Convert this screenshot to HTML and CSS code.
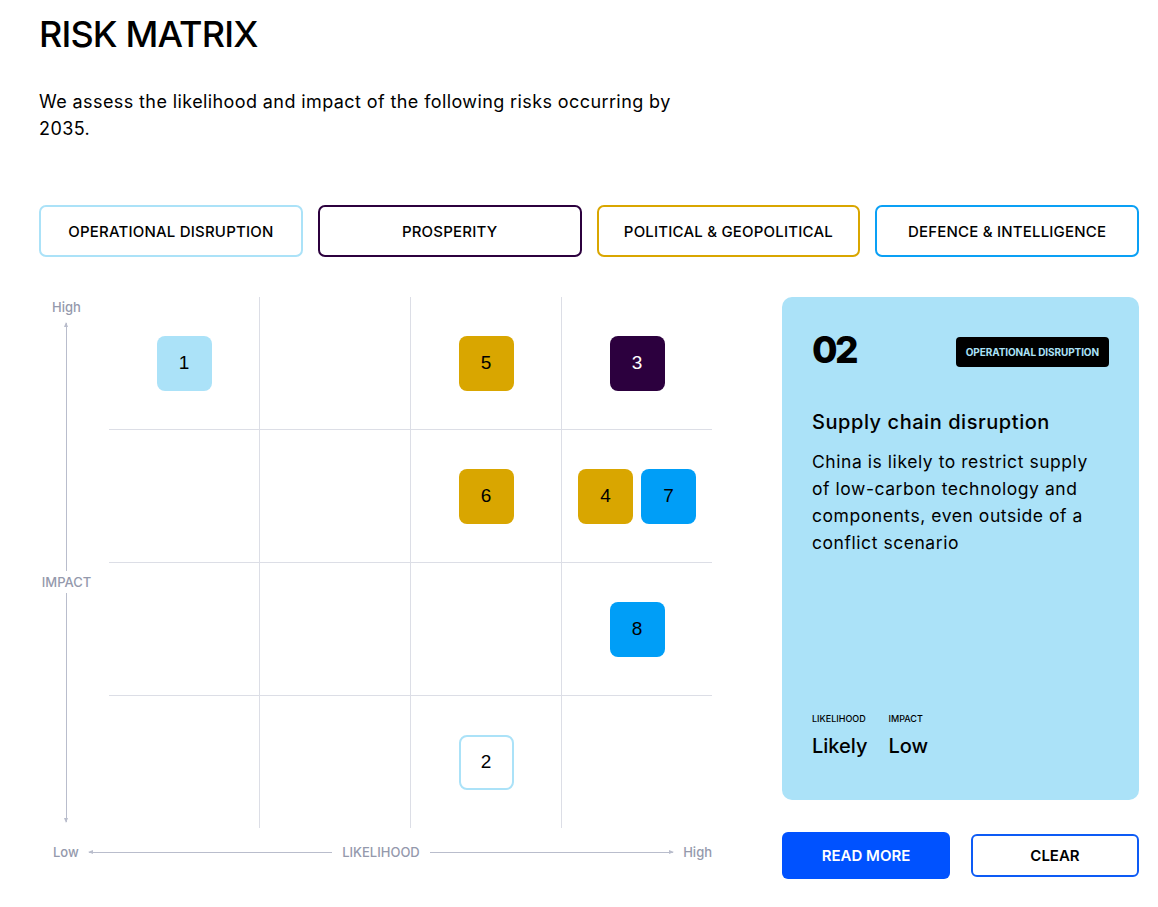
FILE: index.html
```html
<!DOCTYPE html>
<html lang="en">
<head>
<meta charset="utf-8">
<title>Risk Matrix</title>
<link rel="stylesheet" href="styles.css">
</head>
<body>
<main class="page">
  <h1 class="title">RISK MATRIX</h1>
  <p class="intro">We assess the likelihood and impact of the following risks occurring by 2035.</p>

  <div class="filters">
    <button class="filter f-ops">OPERATIONAL DISRUPTION</button>
    <button class="filter f-pros">PROSPERITY</button>
    <button class="filter f-pol">POLITICAL &amp; GEOPOLITICAL</button>
    <button class="filter f-def">DEFENCE &amp; INTELLIGENCE</button>
  </div>

  <div class="content">
    <section class="matrix">
      <div class="y-axis">
        <span class="axis-text">High</span>
        <span class="v-line up"></span>
        <span class="axis-text">IMPACT</span>
        <span class="v-line down"></span>
      </div>
      <div class="grid">
        <div class="cell"><span class="tile t-ops">1</span></div>
        <div class="cell"></div>
        <div class="cell"><span class="tile t-pol">5</span></div>
        <div class="cell"><span class="tile t-pros">3</span></div>

        <div class="cell"></div>
        <div class="cell"></div>
        <div class="cell"><span class="tile t-pol">6</span></div>
        <div class="cell"><span class="tile t-pol">4</span><span class="tile t-def">7</span></div>

        <div class="cell"></div>
        <div class="cell"></div>
        <div class="cell"></div>
        <div class="cell"><span class="tile t-def">8</span></div>

        <div class="cell"></div>
        <div class="cell"></div>
        <div class="cell"><span class="tile t-selected">2</span></div>
        <div class="cell"></div>
      </div>
      <div class="x-axis">
        <span class="axis-text">Low</span>
        <span class="h-line left"></span>
        <span class="axis-text">LIKELIHOOD</span>
        <span class="h-line right"></span>
        <span class="axis-text">High</span>
      </div>
    </section>

    <aside class="side">
      <div class="card">
        <div class="card-head">
          <span class="card-num">02</span>
          <span class="badge">OPERATIONAL DISRUPTION</span>
        </div>
        <h2 class="card-title">Supply chain disruption</h2>
        <p class="card-text">China is likely to restrict supply of low-carbon technology and components, even outside of a conflict scenario</p>
        <div class="card-stats">
          <div class="stat">
            <span class="stat-label">LIKELIHOOD</span>
            <span class="stat-value">Likely</span>
          </div>
          <div class="stat">
            <span class="stat-label">IMPACT</span>
            <span class="stat-value">Low</span>
          </div>
        </div>
      </div>
      <div class="actions">
        <button class="btn btn-primary">READ MORE</button>
        <button class="btn btn-outline">CLEAR</button>
      </div>
    </aside>
  </div>
</main>
</body>
</html>
```

FILE: styles.css
```css
* { box-sizing: border-box; }

body {
  margin: 0;
  background: #ffffff;
  color: #000000;
  font-family: "Inter", "Noto Sans", sans-serif;
}

.page {
  padding: 11px 19px 20px 39px;
}

.title {
  margin: 0;
  font-size: 36px;
  line-height: 46px;
  font-weight: 500;
  letter-spacing: -0.85px;
}

.intro {
  margin: 31px 0 0;
  max-width: 680px;
  font-size: 18px;
  line-height: 27px;
  font-weight: 400;
  letter-spacing: 0.4px;
}

.filters {
  margin-top: 63px;
  display: grid;
  grid-template-columns: repeat(4, 1fr);
  gap: 15px;
}

.filter {
  height: 52px;
  background: #ffffff;
  border: 2px solid;
  border-radius: 7px;
  font-family: inherit;
  font-size: 15px;
  font-weight: 500;
  letter-spacing: 0.2px;
  color: #000000;
  padding: 0;
}
.f-ops { border-color: #abe2f8; }
.f-pros { border-color: #2c003e; }
.f-pol { border-color: #d9a600; }
.f-def { border-color: #0aa0f5; }

.content {
  margin-top: 40px;
  display: flex;
  align-items: flex-start;
  gap: 70px;
}

/* Matrix */
.matrix {
  width: 673px;
  display: grid;
  grid-template-columns: 55px 1fr;
  align-content: start;
  column-gap: 15px;
}

.axis-text {
  font-size: 13px;
  line-height: 18px;
  font-weight: 500;
  color: #9499ac;
  white-space: nowrap;
}

.y-axis {
  display: flex;
  flex-direction: column;
  align-items: center;
  padding-bottom: 6px;
}
.y-axis .axis-text:first-child { margin-top: 1px; margin-bottom: 7px; }

.v-line {
  position: relative;
  flex-basis: 0;
  width: 1px;
  background: #b9bdcc;
}
.v-line.up { flex-grow: 248; margin-bottom: 2px; }
.v-line.down { flex-grow: 229; margin-top: 2px; }
.v-line.up::before,
.v-line.down::after {
  content: "";
  position: absolute;
  left: -2px;
  border-left: 2.5px solid transparent;
  border-right: 2.5px solid transparent;
}
.v-line.up::before { top: -1px; border-bottom: 5px solid #b9bdcc; }
.v-line.down::after { bottom: -1px; border-top: 5px solid #b9bdcc; }

.grid {
  height: 531px;
  display: grid;
  grid-template-columns: repeat(4, 1fr);
  grid-template-rows: repeat(4, 1fr);
  gap: 1px;
  background: #dcdee6;
}

.cell {
  background: #ffffff;
  display: flex;
  align-items: center;
  justify-content: center;
  gap: 8px;
}

.tile {
  width: 55px;
  height: 55px;
  border-radius: 8px;
  display: flex;
  align-items: center;
  justify-content: center;
  font-family: "Liberation Sans", Arial, sans-serif;
  font-size: 19px;
  color: #000000;
}
.t-ops { background: #abe2f8; }
.t-pol { background: #d9a600; }
.t-pros { background: #2c003e; color: #ffffff; }
.t-def { background: #009ef7; }
.t-selected { background: #ffffff; border: 2px solid #abe2f8; }

.x-axis {
  grid-column: 1 / -1;
  margin-top: 15px;
  display: flex;
  align-items: center;
  gap: 10px;
  padding-left: 14px;
}

.h-line {
  position: relative;
  flex: 1;
  height: 1px;
  background: #b9bdcc;
}
.h-line.left::before,
.h-line.right::after {
  content: "";
  position: absolute;
  top: -2px;
  border-top: 2.5px solid transparent;
  border-bottom: 2.5px solid transparent;
}
.h-line.left::before { left: -1px; border-right: 5px solid #b9bdcc; }
.h-line.right::after { right: -1px; border-left: 5px solid #b9bdcc; }

/* Side card */
.side {
  width: 357px;
  display: flex;
  flex-direction: column;
}

.card {
  height: 503px;
  background: #abe2f8;
  border-radius: 10px;
  padding: 30px 30px 40px;
  display: flex;
  flex-direction: column;
}

.card-head {
  display: flex;
  justify-content: space-between;
  align-items: flex-start;
}

.card-num {
  font-size: 37px;
  line-height: 46px;
  font-weight: 800;
  letter-spacing: -2.5px;
}

.badge {
  margin-top: 10px;
  background: #000000;
  color: #abe2f8;
  border-radius: 4px;
  padding: 0 10px;
  height: 30px;
  display: flex;
  align-items: center;
  font-size: 10px;
  font-weight: 700;
  letter-spacing: -0.1px;
}

.card-title {
  margin: 34px 0 0;
  font-size: 20px;
  line-height: 30px;
  font-weight: 500;
  letter-spacing: 0.55px;
}

.card-text {
  margin: 11px 0 0;
  font-size: 17.5px;
  line-height: 27px;
  font-weight: 400;
  letter-spacing: 0.55px;
}

.card-stats {
  margin-top: auto;
  display: flex;
  gap: 21px;
}

.stat {
  display: flex;
  flex-direction: column;
}

.stat-label {
  font-size: 9px;
  line-height: 14px;
  font-weight: 500;
}

.stat-value {
  margin-top: 6px;
  font-size: 20px;
  line-height: 28px;
  font-weight: 500;
}

.actions {
  margin-top: 32px;
  display: grid;
  grid-template-columns: 1fr 1fr;
  gap: 21px;
  align-items: center;
}

.btn {
  font-family: inherit;
  font-size: 15px;
  font-weight: 600;
  border-radius: 6px;
  padding: 0;
}
.btn-primary {
  height: 47px;
  background: #0052ff;
  border: none;
  color: #ffffff;
}
.btn-outline {
  height: 43px;
  background: #ffffff;
  border: 2px solid #0d5bf5;
  color: #000000;
}
```
